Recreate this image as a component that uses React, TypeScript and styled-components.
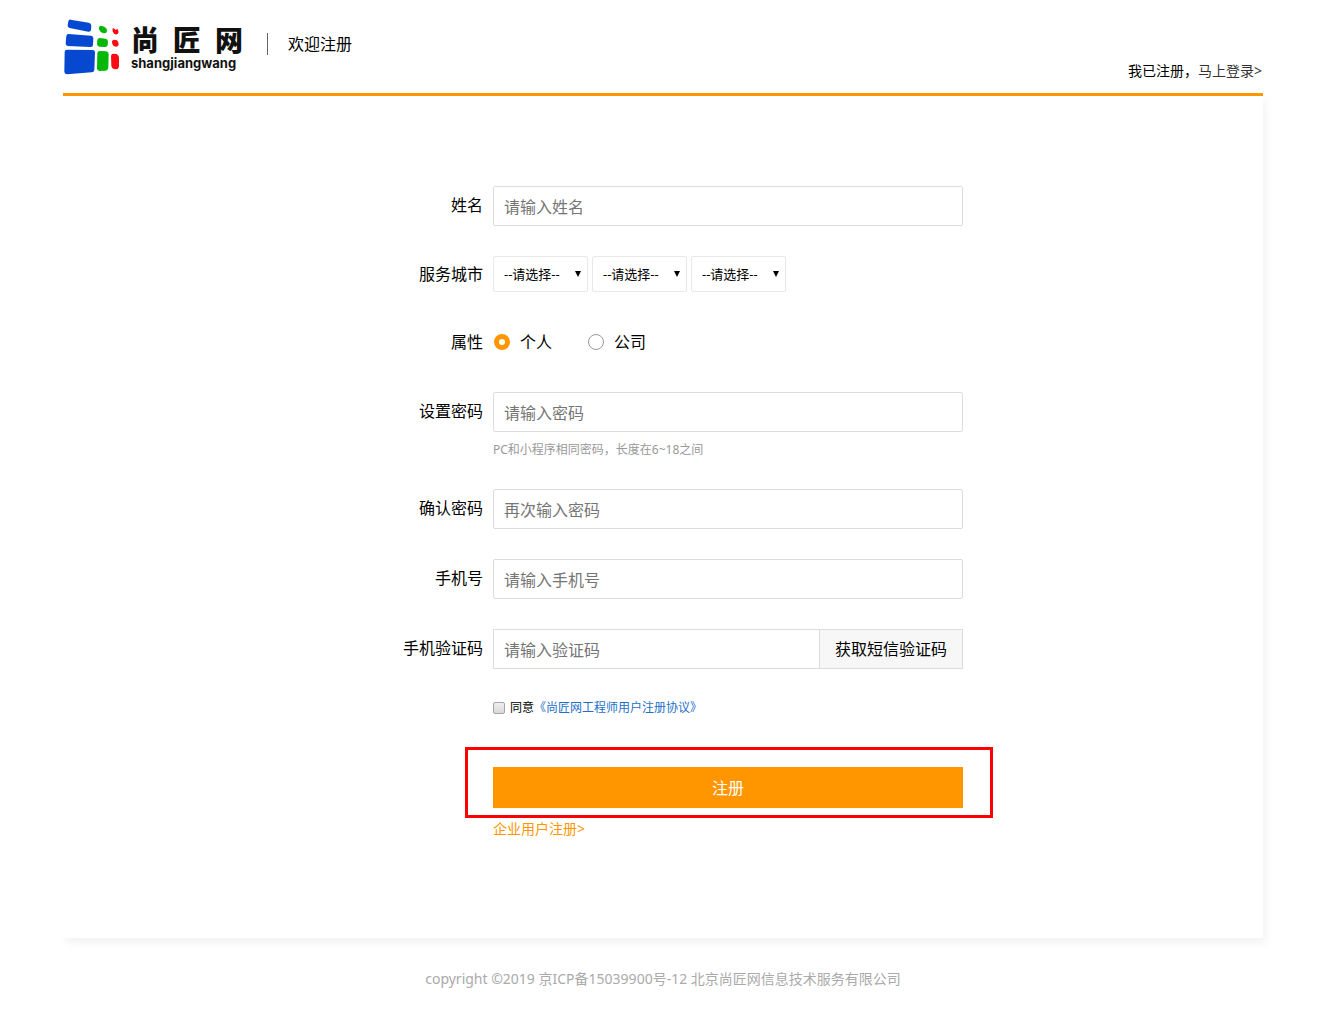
import React, { useState } from "react";
import styled, { createGlobalStyle } from "styled-components";

const orange = "#ff9600";
const line = "#dcdcdc";

const GlobalStyle = createGlobalStyle`
  *, *::before, *::after { box-sizing: border-box; }
  body {
    margin: 0;
    background: #fff;
    color: #000;
    font: 16px/20px "Noto Sans", "Noto Sans CJK SC", sans-serif;
  }
  input, select, button { font-family: inherit; color: inherit; }
  a { text-decoration: none; }
`;

const Page = styled.div`
  max-width: 1200px;
  margin: 0 auto;
`;

const Header = styled.header`
  display: flex;
  justify-content: space-between;
  height: 96px;
  border-bottom: 3px solid ${orange};
`;

const Brand = styled.div`
  display: flex;
  align-items: flex-start;
  padding: 19px 0 0 1px;
`;

const Wordmark = styled.div`
  margin: 9px 0 0 11px;
`;

const WordmarkName = styled.div`
  display: flex;
  gap: 14px;
  font: 900 28px/28px "Liberation Sans", "Noto Sans CJK SC", sans-serif;
  color: #111;
`;

const WordmarkPinyin = styled.div`
  font: 700 13px/14px Inter, sans-serif;
  color: #111;
`;

const Welcome = styled.h1`
  margin: 14px 0 0 24px;
  padding-left: 20px;
  border-left: 1px solid #666;
  font-size: 16px;
  font-weight: 400;
  line-height: 22px;
`;

const LoginHint = styled.p`
  align-self: flex-end;
  margin: 0 1px 12px 0;
  font-size: 14px;
`;

const LoginLink = styled.a`
  color: #333;
`;

const Panel = styled.main`
  padding: 90px 0 99px;
  background: #fff;
  box-shadow: 3px 5px 8px rgba(0, 0, 0, 0.05);
  clip-path: inset(0 -20px -20px 0);
`;

const Form = styled.form`
  display: flex;
  flex-direction: column;
  gap: 30px;
`;

const Row = styled.div`
  display: grid;
  grid-template-columns: minmax(90px, 420px) minmax(0, 470px);
  column-gap: 10px;
`;

const rowLabel = `
  text-align: right;
  white-space: nowrap;
`;

const Label = styled.label`
  ${rowLabel}
  line-height: 38px;
`;

const Caption = styled.span<{ $height: number }>`
  ${rowLabel}
  line-height: ${(p) => p.$height}px;
`;

const Field = styled.div`
  grid-column: 2;
`;

const TextInput = styled.input`
  display: block;
  width: 100%;
  height: 40px;
  padding: 2px 10px 0;
  border: 1px solid ${line};
  border-radius: 2px;
  background: #fff;
  font-size: 16px;
  outline: none;
  &::placeholder { color: #757575; opacity: 1; }
  &:focus { border-color: ${orange}; }
`;

const Hint = styled.p`
  margin: 9px 0 0;
  font-size: 12px;
  line-height: 18px;
  color: #999;
`;

const Selects = styled.div`
  grid-column: 2;
  display: flex;
  gap: 4px;
`;

const SelectBox = styled.span`
  position: relative;
  width: 95px;
`;

const Select = styled.select`
  appearance: none;
  display: block;
  width: 100%;
  height: 36px;
  padding: 0 10px;
  border: 1px solid #e6e9ec;
  border-radius: 2px;
  background: #fff;
  font-size: 13px;
`;

const Arrow = styled.svg`
  position: absolute;
  top: 15px;
  right: 7px;
  pointer-events: none;
`;

const Radios = styled.div`
  grid-column: 2;
  display: flex;
  gap: 36px;
  height: 40px;
  padding-left: 1px;
`;

const RadioLabel = styled.label`
  display: flex;
  align-items: center;
  gap: 10px;
`;

const Radio = styled.input`
  appearance: none;
  width: 16px;
  height: 16px;
  margin: 0;
  border: 1px solid #999;
  border-radius: 50%;
  background: #fff;
  &:checked { border: 5px solid ${orange}; }
`;

const CodeGroup = styled.div`
  display: flex;
`;

const CodeInput = styled(TextInput)`
  flex: 1;
  min-width: 0;
  border-radius: 0;
  border-right: 0;
`;

const CodeButton = styled.button`
  width: 144px;
  height: 40px;
  padding: 0 0 2px;
  border: 1px solid ${line};
  background: #f7f7f7;
  font-size: 16px;
  cursor: pointer;
`;

const Agreement = styled.div`
  grid-column: 2;
  display: flex;
  align-items: center;
  font-size: 12px;
  line-height: 18px;
`;

const Checkbox = styled.input`
  appearance: none;
  width: 12px;
  height: 12px;
  margin: 0 5px 0 0;
  border: 1px solid #a6a6a6;
  border-radius: 2px;
  background: linear-gradient(#eee, #d9d9d9);
  &:checked { background: ${orange}; }
`;

const AgreementLink = styled.a`
  color: #1e6fc8;
`;

const SubmitArea = styled.div`
  grid-column: 2;
  margin-top: 20px;
`;

const Highlight = styled.div`
  position: relative;
  &::after {
    content: "";
    position: absolute;
    inset: -20px -30px -10px -28px;
    border: 3px solid #f00;
    pointer-events: none;
  }
`;

const SubmitButton = styled.button`
  display: block;
  width: 100%;
  height: 41px;
  padding: 0 0 2px;
  border: 0;
  background: ${orange};
  color: #fff;
  font-size: 16px;
  cursor: pointer;
`;

const CompanyLink = styled.a`
  display: inline-block;
  margin-top: 11px;
  font-size: 14px;
  line-height: 20px;
  color: ${orange};
`;

const Footer = styled.footer`
  padding: 31px 0 29px;
  text-align: center;
  font-size: 14px;
  color: #aaa;
`;

function LogoMark() {
  return (
    <svg width="56" height="56" viewBox="24 27 168 168" aria-hidden="true">
      <g fill="#0748d0">
        <path d="M44 29 L98 38 Q106 40 106 47 L105 60 Q104 66 97 65 L41 54 Q34 52 35 45 L37 34 Q39 28 44 29Z" />
        <path d="M37 72 L105 77 Q112 78 112 85 L111 105 Q110 112 103 111 L35 108 Q28 107 29 100 L31 78 Q32 72 37 72Z" />
        <path d="M32 119 L110 120 Q117 120 117 127 L115 180 Q114 187 107 187 L33 193 Q25 192 25 185 L26 125 Q27 119 32 119Z" />
      </g>
      <g fill="#05b705">
        <path d="M134 47 Q144 47 151 55 Q155 62 152 67 Q148 71 141 69 Q131 66 129 58 Q127 49 134 47Z" />
        <path d="M131 84 L149 86 Q156 88 156 95 L155 105 Q153 112 146 111 L130 110 Q123 108 123 101 L124 90 Q125 84 131 84Z" />
        <path d="M131 123 L150 124 Q157 125 158 132 L157 173 Q155 181 149 182 L130 183 Q123 182 123 175 L124 130 Q125 123 131 123Z" />
      </g>
      <g fill="#fb0a14">
        <path d="M170 55 Q175 53 179 60 L184 56 Q190 64 187 70 Q181 76 174 71 Q167 64 170 55Z" />
        <path d="M174 89 L183 91 Q189 97 188 104 Q186 110 180 110 L173 108 Q167 103 168 94 Q170 89 174 89Z" />
        <path d="M171 131 L182 132 Q188 136 189 142 L189 170 Q187 178 180 178 L173 177 Q167 174 166 168 L165 138 Q166 131 171 131Z" />
      </g>
    </svg>
  );
}

const regions = ["省份", "城市", "区县"];

function RegionSelect({ name }: { name: string }) {
  return (
    <SelectBox>
      <Select aria-label={name} defaultValue="">
        <option value="">--请选择--</option>
      </Select>
      <Arrow width="6" height="6" viewBox="0 0 6 6" aria-hidden="true">
        <path d="M0 0H6L3 6Z" fill="#000" />
      </Arrow>
    </SelectBox>
  );
}

interface TextRowProps {
  id: string;
  label: string;
  placeholder: string;
  type?: string;
  hint?: string;
}

function TextRow({ id, label, placeholder, type = "text", hint }: TextRowProps) {
  return (
    <Row>
      <Label htmlFor={id}>{label}</Label>
      <Field>
        <TextInput id={id} type={type} placeholder={placeholder} />
        {hint && <Hint>{hint}</Hint>}
      </Field>
    </Row>
  );
}

export default function App() {
  const [kind, setKind] = useState("个人");

  return (
    <>
      <GlobalStyle />
      <Page lang="zh-CN">
        <Header>
          <Brand>
            <LogoMark />
            <Wordmark>
              <WordmarkName>
                <span>尚</span>
                <span>匠</span>
                <span>网</span>
              </WordmarkName>
              <WordmarkPinyin>shangjiangwang</WordmarkPinyin>
            </Wordmark>
            <Welcome>欢迎注册</Welcome>
          </Brand>
          <LoginHint>
            我已注册，<LoginLink href="#login">马上登录&gt;</LoginLink>
          </LoginHint>
        </Header>

        <Panel>
          <Form onSubmit={(e) => e.preventDefault()}>
            <TextRow id="name" label="姓名" placeholder="请输入姓名" />
            <Row role="group" aria-labelledby="city">
              <Caption id="city" $height={36}>服务城市</Caption>
              <Selects>
                {regions.map((name) => (
                  <RegionSelect key={name} name={name} />
                ))}
              </Selects>
            </Row>
            <Row role="radiogroup" aria-labelledby="kind">
              <Caption id="kind" $height={40}>属性</Caption>
              <Radios>
                {["个人", "公司"].map((value) => (
                  <RadioLabel key={value}>
                    <Radio
                      type="radio"
                      name="kind"
                      checked={kind === value}
                      onChange={() => setKind(value)}
                    />
                    {value}
                  </RadioLabel>
                ))}
              </Radios>
            </Row>
            <TextRow
              id="password"
              type="password"
              label="设置密码"
              placeholder="请输入密码"
              hint="PC和小程序相同密码，长度在6~18之间"
            />
            <TextRow id="confirm" type="password" label="确认密码" placeholder="再次输入密码" />
            <TextRow id="phone" type="tel" label="手机号" placeholder="请输入手机号" />
            <Row>
              <Label htmlFor="code">手机验证码</Label>
              <CodeGroup>
                <CodeInput id="code" type="text" placeholder="请输入验证码" />
                <CodeButton type="button">获取短信验证码</CodeButton>
              </CodeGroup>
            </Row>
            <Row>
              <Agreement>
                <Checkbox id="agree" type="checkbox" />
                <label htmlFor="agree">同意</label>
                <AgreementLink href="#agreement">《尚匠网工程师用户注册协议》</AgreementLink>
              </Agreement>
            </Row>
            <Row>
              <SubmitArea>
                <Highlight>
                  <SubmitButton type="submit">注册</SubmitButton>
                </Highlight>
                <CompanyLink href="#company">企业用户注册&gt;</CompanyLink>
              </SubmitArea>
            </Row>
          </Form>
        </Panel>

        <Footer>copyright ©2019 京ICP备15039900号-12 北京尚匠网信息技术服务有限公司</Footer>
      </Page>
    </>
  );
}
